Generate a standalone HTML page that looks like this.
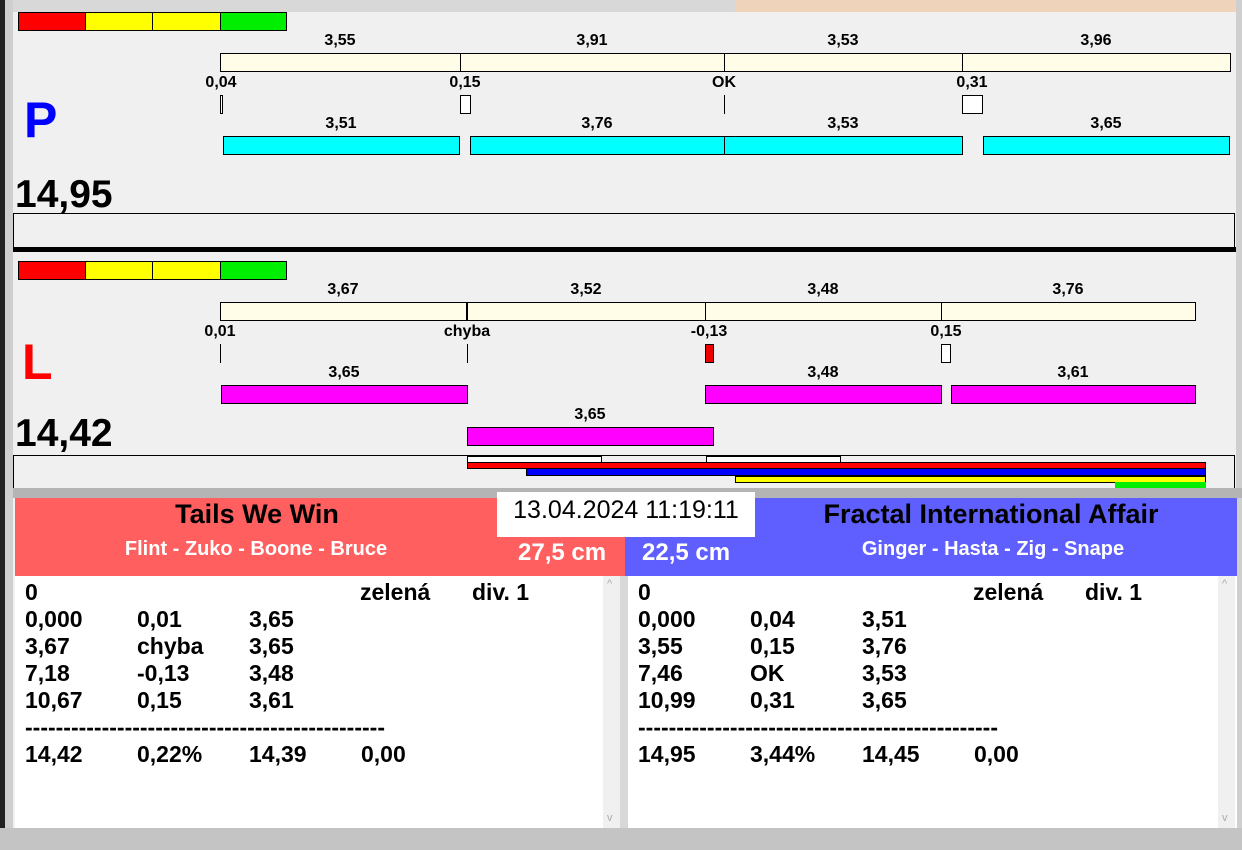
<!DOCTYPE html><html><head><meta charset="utf-8"><style>
*{margin:0;padding:0;box-sizing:border-box}
body{width:1242px;height:850px;overflow:hidden;background:#f0f0f0;position:relative;font-family:"Liberation Sans",sans-serif;font-weight:bold;color:#000}
div{position:absolute}
.b{border:1px solid #000}
.l{font-size:16px;transform:translateX(-50%);white-space:nowrap;line-height:17px}
.t{font-size:23px;line-height:24px;white-space:nowrap}
</style></head><body>
<div style="left:0;top:0;width:1242px;height:12px;background:#d8d8d8"></div>
<div style="left:735px;top:0;width:507px;height:12px;background:#efd3bb"></div>
<div style="left:0;top:0;width:5px;height:850px;background:#222"></div>
<div style="left:5px;top:0;width:8px;height:850px;background:#cfcfcf"></div>
<div style="left:1236px;top:0;width:6px;height:850px;background:#cfcfcf"></div>
<div style="left:13px;top:12px;width:1223px;height:476px;background:#f0f0f0"></div>

<!-- P -->
<div class="b" style="left:18px;top:12px;width:68px;height:19px;background:#f00"></div>
<div class="b" style="left:85px;top:12px;width:68px;height:19px;background:#ff0"></div>
<div class="b" style="left:152px;top:12px;width:69px;height:19px;background:#ff0"></div>
<div class="b" style="left:220px;top:12px;width:67px;height:19px;background:#0e0"></div>
<div class="l" style="left:340px;top:32px">3,55</div><div class="l" style="left:592px;top:32px">3,91</div><div class="l" style="left:843px;top:32px">3,53</div><div class="l" style="left:1096px;top:32px">3,96</div>
<div class="b" style="left:220px;top:53px;width:1011px;height:19px;background:#fffde8"></div>
<div style="left:460px;top:53px;width:1px;height:19px;background:#000"></div>
<div style="left:724px;top:53px;width:1px;height:19px;background:#000"></div>
<div style="left:962px;top:53px;width:1px;height:19px;background:#000"></div>
<div class="l" style="left:221px;top:74px">0,04</div><div class="l" style="left:465px;top:74px">0,15</div><div class="l" style="left:724px;top:74px">OK</div><div class="l" style="left:972px;top:74px">0,31</div>
<div class="b" style="left:220px;top:95px;width:3px;height:19px;background:#fff"></div>
<div class="b" style="left:460px;top:95px;width:11px;height:19px;background:#fff"></div>
<div style="left:724px;top:95px;width:1px;height:19px;background:#000"></div>
<div class="b" style="left:962px;top:95px;width:21px;height:19px;background:#fff"></div>
<div style="left:24px;top:90px;font-size:50px;color:#00f;line-height:60px">P</div>
<div class="l" style="left:341px;top:115px">3,51</div><div class="l" style="left:597px;top:115px">3,76</div><div class="l" style="left:843px;top:115px">3,53</div><div class="l" style="left:1106px;top:115px">3,65</div>
<div class="b" style="left:223px;top:136px;width:237px;height:19px;background:#0ff"></div>
<div class="b" style="left:470px;top:136px;width:255px;height:19px;background:#0ff"></div>
<div class="b" style="left:724px;top:136px;width:239px;height:19px;background:#0ff"></div>
<div class="b" style="left:983px;top:136px;width:247px;height:19px;background:#0ff"></div>
<div style="left:15px;top:172px;font-size:39px;line-height:46px">14,95</div>
<div class="b" style="left:13px;top:213px;width:1222px;height:36px;border-bottom:none"></div>
<div style="left:13px;top:247px;width:1223px;height:5px;background:#000"></div>

<!-- L -->
<div class="b" style="left:18px;top:261px;width:68px;height:19px;background:#f00"></div>
<div class="b" style="left:85px;top:261px;width:68px;height:19px;background:#ff0"></div>
<div class="b" style="left:152px;top:261px;width:69px;height:19px;background:#ff0"></div>
<div class="b" style="left:220px;top:261px;width:67px;height:19px;background:#0e0"></div>
<div class="l" style="left:343px;top:281px">3,67</div><div class="l" style="left:586px;top:281px">3,52</div><div class="l" style="left:823px;top:281px">3,48</div><div class="l" style="left:1068px;top:281px">3,76</div>
<div class="b" style="left:220px;top:302px;width:976px;height:19px;background:#fffde8"></div>
<div style="left:466px;top:302px;width:2px;height:19px;background:#000"></div>
<div style="left:705px;top:302px;width:1px;height:19px;background:#000"></div>
<div style="left:941px;top:302px;width:1px;height:19px;background:#000"></div>
<div class="l" style="left:220px;top:323px">0,01</div><div class="l" style="left:467px;top:323px">chyba</div><div class="l" style="left:709px;top:323px">-0,13</div><div class="l" style="left:946px;top:323px">0,15</div>
<div style="left:220px;top:344px;width:1px;height:19px;background:#000"></div>
<div style="left:467px;top:344px;width:1px;height:19px;background:#000"></div>
<div class="b" style="left:705px;top:344px;width:9px;height:19px;background:#e00"></div>
<div class="b" style="left:941px;top:344px;width:10px;height:19px;background:#fff"></div>
<div style="left:22px;top:332px;font-size:50px;color:#f00;line-height:60px">L</div>
<div class="l" style="left:344px;top:364px">3,65</div><div class="l" style="left:823px;top:364px">3,48</div><div class="l" style="left:1073px;top:364px">3,61</div>
<div class="b" style="left:221px;top:385px;width:247px;height:19px;background:#f0f"></div>
<div class="b" style="left:705px;top:385px;width:237px;height:19px;background:#f0f"></div>
<div class="b" style="left:951px;top:385px;width:245px;height:19px;background:#f0f"></div>
<div class="l" style="left:590px;top:406px">3,65</div>
<div class="b" style="left:467px;top:427px;width:247px;height:19px;background:#f0f"></div>
<div style="left:15px;top:411px;font-size:39px;line-height:46px">14,42</div>
<div class="b" style="left:13px;top:455px;width:1222px;height:36px;border-bottom:none"></div>
<div class="b" style="left:467px;top:456px;width:135px;height:7px;background:#fff"></div>
<div class="b" style="left:706px;top:456px;width:135px;height:7px;background:#fff"></div>
<div class="b" style="left:467px;top:462px;width:739px;height:7px;background:#f00"></div>
<div class="b" style="left:526px;top:468px;width:680px;height:8px;background:#00f"></div>
<div class="b" style="left:735px;top:476px;width:471px;height:7px;background:#ff0"></div>
<div style="left:1115px;top:482px;width:91px;height:7px;background:#0e0"></div>

<div style="left:13px;top:488px;width:1229px;height:10px;background:#b4b4b4"></div>
<div style="left:15px;top:498px;width:610px;height:78px;background:#ff5f5f"></div>
<div style="left:625px;top:498px;width:612px;height:78px;background:#5f5fff"></div>
<div style="left:15px;top:498px;width:484px;text-align:center;font-size:27px;line-height:32px">Tails We Win</div>
<div style="left:755px;top:498px;width:472px;text-align:center;font-size:27px;line-height:32px">Fractal International Affair</div>
<div style="left:497px;top:492px;width:258px;height:45px;background:#fff;font-weight:normal;font-size:25px;line-height:36px;text-align:center">13.04.2024 11:19:11</div>
<div style="left:15px;top:536px;width:482px;text-align:center;color:#fff;font-size:20px;line-height:26px">Flint - Zuko - Boone - Bruce</div>
<div style="left:755px;top:536px;width:476px;text-align:center;color:#fff;font-size:20px;line-height:26px">Ginger - Hasta - Zig - Snape</div>
<div style="left:518px;top:539px;color:#fff;font-size:24px;line-height:28px">27,5 cm</div>
<div style="left:642px;top:539px;color:#fff;font-size:24px;line-height:28px">22,5 cm</div>

<div style="left:15px;top:576px;width:605px;height:252px;background:#fff"></div>
<div style="left:603px;top:576px;width:17px;height:252px;background:#f0f0f0"></div>
<div style="left:628px;top:576px;width:609px;height:252px;background:#fff"></div>
<div style="left:1218px;top:576px;width:17px;height:252px;background:#f0f0f0"></div>
<div style="left:620px;top:576px;width:8px;height:252px;background:#d8d8d8"></div>
<div style="left:0;top:828px;width:1242px;height:22px;background:#c4c4c4"></div>

<div class="t" style="left:25px;top:580px">0</div><div class="t" style="left:360px;top:580px">zelená</div><div class="t" style="left:472px;top:580px">div. 1</div>
<div class="t" style="left:25px;top:607px">0,000</div><div class="t" style="left:137px;top:607px">0,01</div><div class="t" style="left:249px;top:607px">3,65</div>
<div class="t" style="left:25px;top:634px">3,67</div><div class="t" style="left:137px;top:634px">chyba</div><div class="t" style="left:249px;top:634px">3,65</div>
<div class="t" style="left:25px;top:661px">7,18</div><div class="t" style="left:137px;top:661px">-0,13</div><div class="t" style="left:249px;top:661px">3,48</div>
<div class="t" style="left:25px;top:688px">10,67</div><div class="t" style="left:137px;top:688px">0,15</div><div class="t" style="left:249px;top:688px">3,61</div>
<div class="t" style="left:25px;top:715px;width:360px;overflow:hidden">--------------------------------------------------------</div>
<div class="t" style="left:25px;top:742px">14,42</div><div class="t" style="left:137px;top:742px">0,22%</div><div class="t" style="left:249px;top:742px">14,39</div><div class="t" style="left:361px;top:742px">0,00</div>

<div class="t" style="left:638px;top:580px">0</div><div class="t" style="left:973px;top:580px">zelená</div><div class="t" style="left:1085px;top:580px">div. 1</div>
<div class="t" style="left:638px;top:607px">0,000</div><div class="t" style="left:750px;top:607px">0,04</div><div class="t" style="left:862px;top:607px">3,51</div>
<div class="t" style="left:638px;top:634px">3,55</div><div class="t" style="left:750px;top:634px">0,15</div><div class="t" style="left:862px;top:634px">3,76</div>
<div class="t" style="left:638px;top:661px">7,46</div><div class="t" style="left:750px;top:661px">OK</div><div class="t" style="left:862px;top:661px">3,53</div>
<div class="t" style="left:638px;top:688px">10,99</div><div class="t" style="left:750px;top:688px">0,31</div><div class="t" style="left:862px;top:688px">3,65</div>
<div class="t" style="left:638px;top:715px;width:360px;overflow:hidden">--------------------------------------------------------</div>
<div class="t" style="left:638px;top:742px">14,95</div><div class="t" style="left:750px;top:742px">3,44%</div><div class="t" style="left:862px;top:742px">14,45</div><div class="t" style="left:974px;top:742px">0,00</div>
<div style="left:607px;top:578px;font-size:11px;color:#aaa;font-weight:normal">^</div>
<div style="left:607px;top:812px;font-size:11px;color:#aaa;font-weight:normal">v</div>
<div style="left:1222px;top:578px;font-size:11px;color:#aaa;font-weight:normal">^</div>
<div style="left:1222px;top:812px;font-size:11px;color:#aaa;font-weight:normal">v</div>
</body></html>
